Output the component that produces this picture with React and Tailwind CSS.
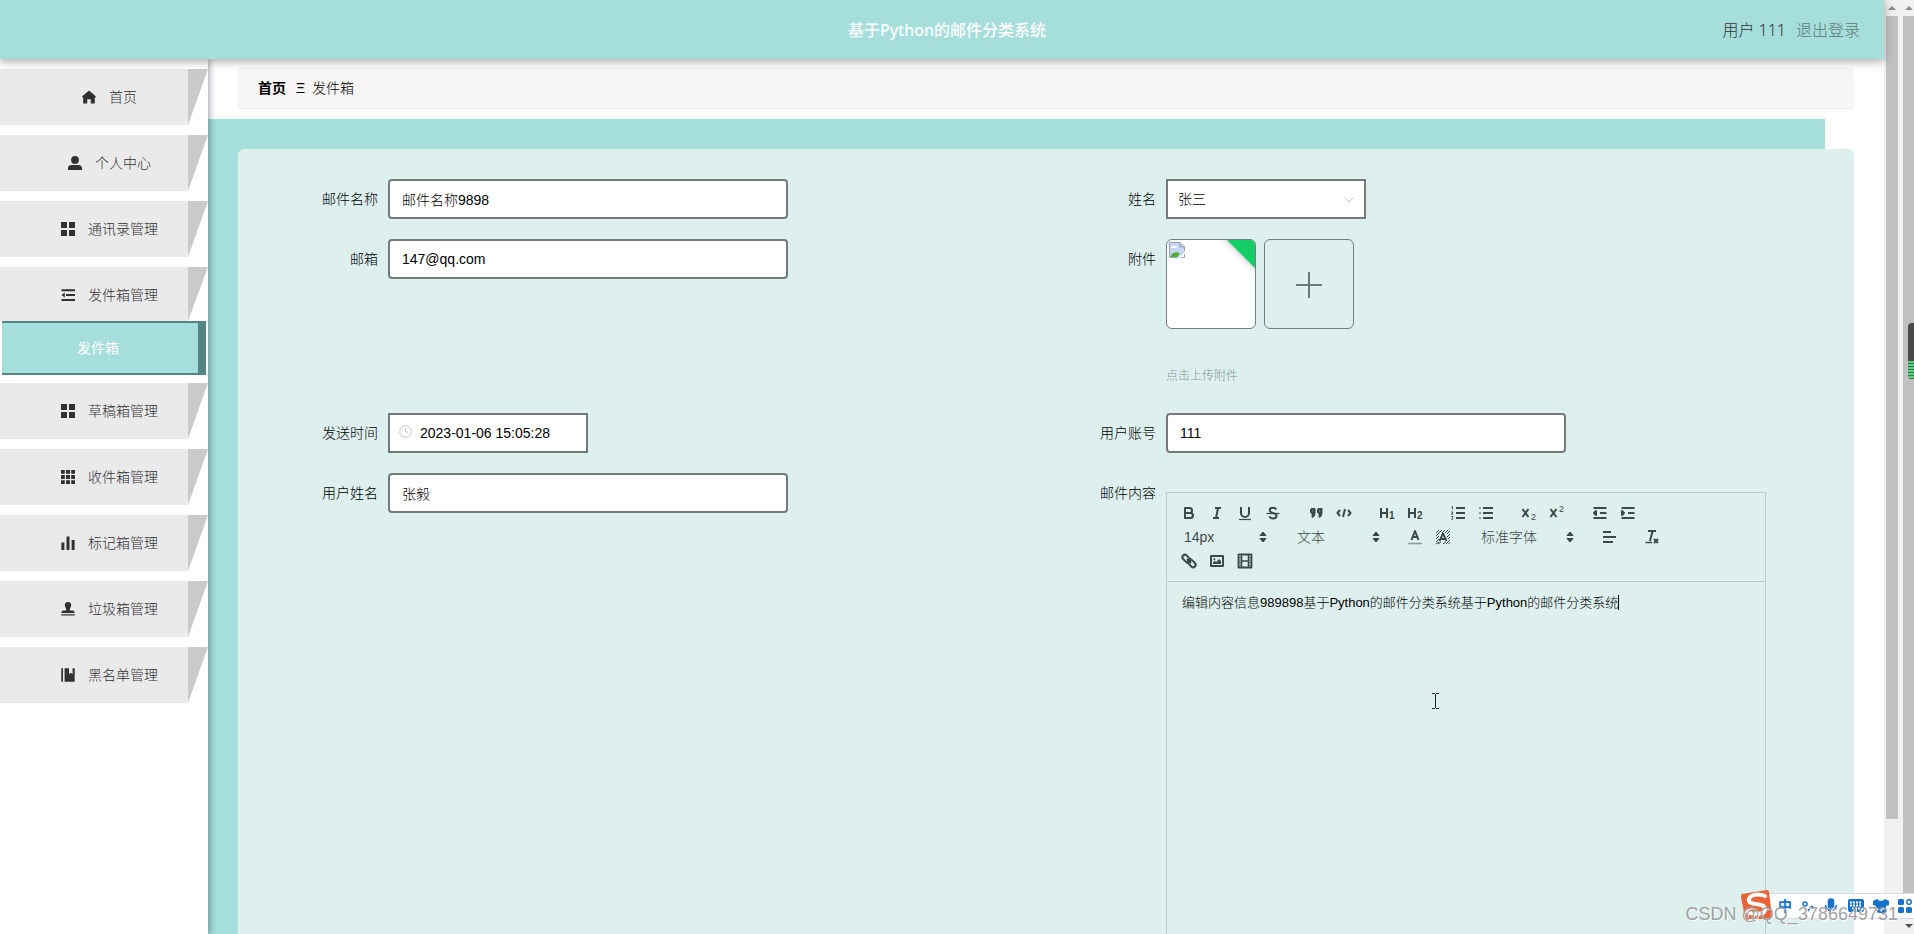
import { useState } from 'react';

const menuItems = [
  { label: '首页', icon: 'home' },
  { label: '个人中心', icon: 'user' },
  { label: '通讯录管理', icon: 'menu' },
  { label: '发件箱管理', icon: 'fold', children: ['发件箱'] },
  { label: '草稿箱管理', icon: 'menu' },
  { label: '收件箱管理', icon: 'grid' },
  { label: '标记箱管理', icon: 'data' },
  { label: '垃圾箱管理', icon: 'stamp' },
  { label: '黑名单管理', icon: 'book' },
];

const menuIcons = {
  home: <path d="M7 0.5 L0.3 6.2 V7.5 H1.2 V13.5 H5.2 V9.2 H8.8 V13.5 H12.8 V7.5 H13.7 V6.2 Z" />,
  user: (
    <>
      <circle cx="7" cy="3.9" r="3.9" />
      <path d="M0 14 V12.5 A3.5 3.5 0 0 1 3.5 9 H10.5 A3.5 3.5 0 0 1 14 12.5 V14 Z" />
    </>
  ),
  menu: <path d="M0 0H6V6H0Z M8 0H14V6H8Z M0 8H6V14H0Z M8 8H14V14H8Z" />,
  fold: <path d="M0.5 1.2H14V3.2H0.5Z M5 6H14V8H5Z M0.5 11H14V13H0.5Z M0.5 7 L3.8 4.5 V9.5Z" />,
  grid: (
    <path d="M0 0H3.8V3.8H0Z M5 0H9V3.8H5Z M10.2 0H14V3.8H10.2Z M0 5H3.8V9H0Z M5 5H9V9H5Z M10.2 5H14V9H10.2Z M0 10.2H3.8V14H0Z M5 10.2H9V14H5Z M10.2 10.2H14V14H10.2Z" />
  ),
  data: <path d="M0.4 6.5H3.4V14H0.4Z M5.5 0.4H8.5V14H5.5Z M10.6 4H13.6V14H10.6Z" />,
  stamp: (
    <path d="M7 0 A3.2 3.2 0 0 1 10.2 3.2 C10.2 5 8.8 5.8 8.8 7.5 V8.6 H11.5 A2 2 0 0 1 13.5 11 H0.5 A2 2 0 0 1 2.5 8.6 H5.2 V7.5 C5.2 5.8 3.8 5 3.8 3.2 A3.2 3.2 0 0 1 7 0Z M0.3 12.2H13.7V13.6H0.3Z" />
  ),
  book: <path d="M0.3 0.2H2V13.8H0.3Z M3.6 0.2H8V6.3L9.8 4.8L11.6 6.3V0.2H13.7V13.8H3.6Z" />,
};

function MenuIcon({ name }) {
  return (
    <svg className="w-3.5 h-3.5 shrink-0" viewBox="0 0 14 14" fill="currentColor">
      {menuIcons[name]}
    </svg>
  );
}

const toolbarIcons = {
  bold: (
    <>
      <path d="M5 4H9.5A2.5 2.5 0 0 1 9.5 9H5Z" />
      <path d="M5 9H10.5A2.5 2.5 0 0 1 10.5 14H5Z" />
    </>
  ),
  italic: <path d="M7 4H13M5 14H11M8 14L10 4" />,
  underline: (
    <>
      <path d="M5 3V9A4 4 0 0 0 13 9V3" />
      <path d="M3 15.5H15" strokeWidth="1.2" />
    </>
  ),
  strike: (
    <>
      <path d="M12.3 5.6C11.6 4 10.4 3.7 9 3.7C7.2 3.7 5.7 4.6 5.7 6.3C5.7 8 7.2 8.5 9 9C11.2 9.6 12.5 10.2 12.5 11.8C12.5 13.4 11 14.4 9 14.4C7.2 14.4 5.9 13.8 5.3 12.3" />
      <path d="M2.5 9.5H15.5" strokeWidth="1.2" />
    </>
  ),
  quote: (
    <path
      d="M4 5H7.5V8.5C7.5 11 6.5 12.5 4.8 13M4 5V8.3H7M11 5H14.5V8.5C14.5 11 13.5 12.5 11.8 13M11 5V8.3H14"
      fill="currentColor"
    />
  ),
  code: <path d="M5 6L2.5 9L5 12M13 6L15.5 9L13 12M10 5L8 13" />,
  h1: (
    <>
      <path d="M3 4V14M9 4V14M3 9H9" />
      <text x="11" y="15" fontSize="10" fontWeight="700" fill="currentColor" stroke="none">1</text>
    </>
  ),
  h2: (
    <>
      <path d="M3 4V14M9 4V14M3 9H9" />
      <text x="11" y="15" fontSize="10" fontWeight="700" fill="currentColor" stroke="none">2</text>
    </>
  ),
  ordered: (
    <>
      <path d="M7 4H16M7 9H16M7 14H16" />
      <path d="M2.5 3L3.5 2.5V5.5M2.3 8H4L2.5 10.3H4.2M2.3 12.6H4L3.2 13.8L4 14.4L3.3 15.5H2.2" strokeWidth="0.9" />
    </>
  ),
  bullet: <path d="M6 4H16M6 9H16M6 14H16M2.5 4H3.5M2.5 9H3.5M2.5 14H3.5" />,
  sub: (
    <>
      <path d="M2.5 5L8.5 13M8.5 5L2.5 13" />
      <text x="11" y="16" fontSize="9" fill="currentColor" stroke="none">2</text>
    </>
  ),
  sup: (
    <>
      <path d="M2.5 5L8.5 13M8.5 5L2.5 13" />
      <text x="11" y="8" fontSize="9" fill="currentColor" stroke="none">2</text>
    </>
  ),
  outdent: (
    <>
      <path d="M2.5 4H15.5M2.5 14H15.5M9 9H15.5" />
      <path d="M5 7V11L3 9Z" fill="currentColor" />
    </>
  ),
  indent: (
    <>
      <path d="M2.5 4H15.5M2.5 14H15.5M9 9H15.5" />
      <path d="M3 7V11L5 9Z" fill="currentColor" />
    </>
  ),
  color: (
    <>
      <path d="M2 15.5H16" strokeWidth="1.6" opacity="0.5" />
      <path d="M5.5 12L9 3L12.5 12M6.5 9H11.5" />
    </>
  ),
  background: (
    <>
      <path
        d="M2 5L5 2M2 8L8 2M2 11L5 8M8 5L11 2M2 14L5 11M11 5L14 2M2 16L5 14M13 6L16 3M4 16L7 14M13 9L16 6M9 16L12 14M14 11L16 9M12 16L16 12M14.5 16L16 14.5"
        strokeWidth="1"
      />
      <path d="M5.5 13L9 5.5L12.5 13M6.5 11H11.5" strokeWidth="1.8" />
    </>
  ),
  align: <path d="M3 4H11M3 9H16M3 14H13" />,
  clean: (
    <>
      <path d="M5 3H13M9.6 3L7 13" />
      <path d="M2.5 14.5H9" strokeWidth="1.4" />
      <path d="M11 11L15 15M15 11L11 15" />
    </>
  ),
  link: (
    <>
      <path d="M7 7L11 11" />
      <rect x="1.8" y="4.2" width="9" height="5" rx="2.5" transform="rotate(45 6.3 6.7)" />
      <rect x="7.2" y="8.8" width="9" height="5" rx="2.5" transform="rotate(45 11.7 11.3)" />
    </>
  ),
  image: (
    <>
      <rect x="3" y="4" width="12" height="10" />
      <circle cx="6.3" cy="7.2" r="1" fill="currentColor" stroke="none" />
      <path d="M5 12V10.5L7 9L8.5 10L11 7L13 9V12Z" fill="currentColor" stroke="none" />
    </>
  ),
  video: (
    <>
      <rect x="2.5" y="2.5" width="13" height="13" strokeWidth="1.8" />
      <path d="M5.5 3V15M12.5 3V15M5.5 9H12.5" strokeWidth="1.6" />
      <path d="M3 5.5H5M3 8H5M3 10.5H5M3 13H5M13 5.5H15M13 8H15M13 10.5H15M13 13H15" strokeWidth="0.9" />
    </>
  ),
};

function ToolButton({ name }) {
  return (
    <button type="button" aria-label={name} className="w-7 h-6 flex items-center justify-center">
      <svg
        className="w-[18px] h-[18px] overflow-visible"
        viewBox="0 0 18 18"
        fill="none"
        stroke="currentColor"
        strokeWidth="2"
        strokeLinejoin="round"
      >
        {toolbarIcons[name]}
      </svg>
    </button>
  );
}

function ToolGroup({ names }) {
  return (
    <div className="flex mr-[15px]">
      {names.map((name) => (
        <ToolButton key={name} name={name} />
      ))}
    </div>
  );
}

function Picker({ label, value, wide }) {
  return (
    <div className={`relative mr-[15px] h-6 ${wide ? 'w-[108px]' : 'w-[98px]'}`}>
      <select aria-label={label} className="w-full h-6 pl-[9px] appearance-none bg-transparent text-sm leading-6 outline-none">
        <option>{value}</option>
      </select>
      <svg className="absolute right-px top-[3px] w-[18px] h-[18px] pointer-events-none" viewBox="0 0 18 18" fill="currentColor">
        <path d="M6 7.5L9 4L12 7.5Z M6 10.5L9 14L12 10.5Z" stroke="currentColor" strokeLinejoin="round" />
      </svg>
    </div>
  );
}

function Field({ id, label, children }) {
  return (
    <div className="flex items-start">
      <label htmlFor={id} className="w-[120px] shrink-0 pr-2.5 text-right text-sm leading-10">
        {label}
      </label>
      {children}
    </div>
  );
}

function TextInput({ id, defaultValue }) {
  return (
    <input
      id={id}
      type="text"
      defaultValue={defaultValue}
      className="w-[400px] h-10 px-3 border-2 border-[#737b7b] rounded bg-white text-sm outline-none"
    />
  );
}

function Upload() {
  return (
    <div>
      <div className="flex gap-2">
        <div className="relative w-[90px] h-[90px] overflow-hidden rounded-md border border-[#6f8080] bg-white p-0.5">
          <svg className="w-4 h-4" viewBox="0 0 16 16">
            <path d="M0.5 0.5H11L15.5 5V10L10 15.5H0.5Z" fill="#c6d6f6" />
            <path d="M2 5.5A2 2 0 0 1 5 4A2 2 0 0 1 8 6H2Z" fill="#fff" />
            <path d="M1 15.5C3 10 7 9 11 11.5L8 15.5Z" fill="#55a83c" />
            <path d="M0.5 15.5V0.5H11L15.5 5V9M11 0.5V5H15.5M0.5 15.5H8M12 15.5H15.5V12" fill="none" stroke="#9a9fa6" />
          </svg>
          <svg className="absolute top-0 right-0 w-10 h-10" viewBox="0 0 40 40">
            <path d="M4 0L40 36V0Z" fill="#000" opacity="0.03" />
            <path d="M8 0L40 32V0Z" fill="#000" opacity="0.04" />
            <path d="M10 0L40 30V0Z" fill="#000" opacity="0.05" />
            <path d="M12 0L40 28V0Z" fill="#13ce66" />
          </svg>
        </div>
        <button
          type="button"
          id="attachment"
          aria-label="附件"
          className="w-[90px] h-[90px] rounded-md border border-[#6f8080] flex items-center justify-center text-[#6b7878]"
        >
          <svg className="w-7 h-7" viewBox="0 0 28 28" fill="none" stroke="currentColor" strokeWidth="2">
            <path d="M1 15H27M14 2V28" />
          </svg>
        </button>
      </div>
      <div className="mt-[37px] pb-[7px] text-xs leading-5 text-[#84969b]">点击上传附件</div>
    </div>
  );
}

function Editor() {
  return (
    <div className="mt-[19px] w-[600px] border border-[#b9cccb]">
      <div className="flex flex-wrap p-2 border-b border-[#b9cccb] text-[#3d4848]">
        <ToolGroup names={['bold', 'italic', 'underline', 'strike']} />
        <ToolGroup names={['quote', 'code']} />
        <ToolGroup names={['h1', 'h2']} />
        <ToolGroup names={['ordered', 'bullet']} />
        <ToolGroup names={['sub', 'sup']} />
        <ToolGroup names={['outdent', 'indent']} />
        <Picker label="字号" value="14px" />
        <Picker label="标题" value="文本" />
        <ToolGroup names={['color', 'background']} />
        <Picker label="字体" value="标准字体" wide />
        <ToolGroup names={['align']} />
        <ToolGroup names={['clean']} />
        <ToolGroup names={['link', 'image', 'video']} />
      </div>
      <div
        id="content"
        role="textbox"
        aria-multiline="true"
        aria-label="邮件内容"
        contentEditable
        suppressContentEditableWarning
        className="min-h-[500px] px-[15px] py-3 text-[13px] leading-[18px] outline-none"
      >
        <span className="border-r border-black">编辑内容信息989898基于Python的邮件分类系统基于Python的邮件分类系统</span>
      </div>
    </div>
  );
}

function Sidebar() {
  const [active, setActive] = useState('发件箱');

  return (
    <nav className="relative z-10 w-[208px] shrink-0 bg-white pt-2.5 shadow-[2px_0_6px_rgba(0,21,41,0.35)]">
      {menuItems.map((item) => (
        <div key={item.label}>
          <a
            href="#"
            className={`flex text-sm text-[#303133] ${item.children ? 'h-[54px]' : 'h-14 mb-2.5'}`}
          >
            <span
              className={`flex-1 pl-[31px] flex items-center justify-center gap-[13px] bg-[#eaeaea] ${item.children ? 'pt-0.5' : ''}`}
            >
              <MenuIcon name={item.icon} />
              {item.label}
            </span>
            <span className="w-5 bg-[#cbcaca] [clip-path:polygon(0_0,100%_0,0_100%)]" />
          </a>
          {item.children?.map((child) => (
            <button
              key={child}
              type="button"
              onClick={() => setActive(child)}
              className={`block w-[204px] h-[54px] ml-0.5 mb-2 pr-1 text-sm ${
                active === child
                  ? 'border-y-2 border-r-8 border-[#558583] bg-[#a5dedb] font-normal text-white'
                  : 'text-[#303133]'
              }`}
            >
              {child}
            </button>
          ))}
        </div>
      ))}
    </nav>
  );
}

function Scrollbars() {
  return (
    <div className="flex shrink-0 bg-[#f1f1f1]" aria-hidden="true">
      <div className="w-4 px-0.5 flex flex-col">
        <svg className="h-4 w-3" viewBox="0 0 12 16" fill="#8b8b8b">
          <path d="M6 6L10 10H2Z" />
        </svg>
        <div className="h-[86%] bg-[#c1c1c1]" />
      </div>
      <div className="w-3.5 pl-[3px] flex flex-col">
        <svg className="h-4 w-3 shrink-0" viewBox="0 0 12 16" fill="#8b8b8b">
          <path d="M6 6L10 10H2Z" />
        </svg>
        <div className="flex-1 bg-[#c1c1c1]" />
        <svg className="h-[41px] w-3 shrink-0" viewBox="0 0 12 41" fill="#505050">
          <path d="M6 35L10 31H2Z" />
        </svg>
      </div>
    </div>
  );
}

function InputMethodBar() {
  return (
    <div className="absolute right-0 bottom-[15px] w-[154px] h-[26px] border-y border-l border-[#dcd8ee] bg-white/95 flex items-center text-[#1672cf]">
      <svg className="absolute -left-5 -top-[5px] w-8 h-8" viewBox="0 0 32 32">
        <path d="M1 5L26 1Q28 1 28 3L31 27Q31 29 29 29L7 31Q5 31 4 29L0 8Q0 5 1 5Z" fill="#ea6337" />
        <path
          d="M24 7C16 4 7 6 8 12C9 17 24 13 24 20C24 26 13 26 7 23"
          fill="none"
          stroke="#fff"
          strokeWidth="4"
          strokeLinecap="round"
        />
      </svg>
      <div className="flex w-full items-center justify-between pl-[17px] pr-0.5">
        <span className="w-3.5 text-sm leading-6 font-bold">中</span>
        <svg className="w-3.5 h-3.5" viewBox="0 0 14 14" fill="currentColor">
          <circle cx="4" cy="5" r="2" fill="none" stroke="currentColor" strokeWidth="1.5" />
          <circle cx="11" cy="8" r="1.5" />
          <path d="M6.5 10H9.5L7 13Z" />
        </svg>
        <svg className="w-3.5 h-4" viewBox="0 0 14 16" fill="none" stroke="currentColor" strokeWidth="1.6">
          <rect x="4.5" y="1" width="5" height="9" rx="2.5" fill="currentColor" />
          <path d="M1.5 7A5.5 5.5 0 0 0 12.5 7M7 12V15" />
        </svg>
        <svg className="w-4 h-3.5" viewBox="0 0 16 14">
          <rect width="16" height="13" rx="2" fill="currentColor" />
          <path d="M2 3.5H14M2 6.5H14M4 9.5H12" stroke="#fff" strokeWidth="1.8" strokeDasharray="2 1" />
        </svg>
        <svg className="w-4 h-3.5" viewBox="0 0 16 14" fill="currentColor">
          <path d="M4 0Q8 4 12 0L16 2V6L13 7V13Q8 15 3 13V7L0 6V2Z" />
        </svg>
        <svg className="w-3.5 h-3.5" viewBox="0 0 14 14" fill="currentColor">
          <rect width="6" height="6" rx="1.5" />
          <circle cx="11" cy="3" r="2.3" fill="none" stroke="currentColor" strokeWidth="1.4" />
          <rect y="8" width="6" height="6" rx="1.5" />
          <rect x="8" y="8" width="6" height="6" rx="1.5" />
        </svg>
      </div>
    </div>
  );
}

export default function App() {
  return (
    <div className="relative flex h-screen overflow-hidden bg-white text-black font-light font-['Liberation_Sans','Noto_Sans_CJK_SC',sans-serif]">
      <div className="flex-1 min-w-0 flex flex-col">
        <header className="relative z-20 shrink-0 h-[59px] px-6 flex items-center bg-[#a5dedb] font-['Noto_Sans','Noto_Sans_CJK_SC',sans-serif] shadow-[0_2px_8px_1px_rgba(110,95,95,0.5)]">
          <h1 className="absolute inset-x-0 pl-2.5 text-center text-base font-medium text-white">基于Python的邮件分类系统</h1>
          <div className="relative ml-auto flex gap-2.5 text-base">
            <span className="text-[#333]">用户 111</span>
            <a href="#" className="text-[#5f7775]">退出登录</a>
          </div>
        </header>

        <div className="flex-1 min-h-0 flex">
          <Sidebar />

          <main className="flex-1 min-w-0 flex flex-col">
            <div className="mt-2 mx-[30px] h-[42px] shrink-0 px-5 flex items-center gap-2.5 rounded border-b border-[#eceaea] bg-[#f7f5f5] text-sm">
              <a href="#" className="font-bold">首页</a>
              <span className="w-1.5">Ξ</span>
              <span>发件箱</span>
            </div>

            <div className="mt-2.5 mr-[59px] flex-1 min-h-0 pt-[30px] pl-[30px] bg-[#a5dedb]">
              <form className="-mr-[29px] p-[30px] grid grid-cols-2 gap-y-5 items-start rounded-t-md bg-[#ddf0ee]">
                <Field id="subject" label="邮件名称">
                  <TextInput id="subject" defaultValue="邮件名称9898" />
                </Field>
                <Field id="name" label="姓名">
                  <div className="relative w-[200px]">
                    <select id="name" className="w-full h-10 px-2.5 border-2 border-[#737b7b] appearance-none bg-white text-sm outline-none">
                      <option>张三</option>
                    </select>
                    <svg className="absolute right-3 top-4 w-2.5 h-2.5 pointer-events-none" viewBox="0 0 10 10" fill="none" stroke="#c0c4cc">
                      <path d="M0.5 2.5L5 7L9.5 2.5" />
                    </svg>
                  </div>
                </Field>
                <Field id="email" label="邮箱">
                  <TextInput id="email" defaultValue="147@qq.com" />
                </Field>
                <Field id="attachment" label="附件">
                  <Upload />
                </Field>
                <Field id="sendTime" label="发送时间">
                  <div className="relative w-[200px]">
                    <input
                      id="sendTime"
                      type="text"
                      defaultValue="2023-01-06 15:05:28"
                      className="w-full h-10 pl-[30px] border-2 border-[#737b7b] bg-white text-sm outline-none"
                    />
                    <svg className="absolute left-[11px] top-3 w-[13px] h-[13px]" viewBox="0 0 13 13" fill="none" stroke="#c0c4cc">
                      <circle cx="6.5" cy="6.5" r="5.8" />
                      <path d="M6.5 3V7H9.5" />
                    </svg>
                  </div>
                </Field>
                <Field id="account" label="用户账号">
                  <TextInput id="account" defaultValue="111" />
                </Field>
                <Field id="realName" label="用户姓名">
                  <TextInput id="realName" defaultValue="张毅" />
                </Field>
                <Field id="content" label="邮件内容">
                  <Editor />
                </Field>
              </form>
            </div>
          </main>
        </div>
      </div>

      <Scrollbars />

      {/* floating desktop widgets */}
      <div className="absolute right-0 top-[323px] w-1.5 h-14 rounded-l bg-[#4a4a4a] overflow-hidden flex flex-col justify-end">
        <div className="h-[18px] bg-[repeating-linear-gradient(#5fce80_0_2px,#2f7a48_2px_3px)]" />
      </div>
      <svg className="absolute left-3/4 top-3/4 -mt-2 -ml-1 w-[7px] h-4" viewBox="0 0 7 16" fill="none" stroke="#222">
        <path d="M0 0.5H3M4 0.5H7M3.5 1V15M0 15.5H3M4 15.5H7" />
      </svg>
      <InputMethodBar />
      <div className="absolute right-4 bottom-2 text-lg leading-6 text-[#9a9a9a] [text-shadow:1px_1px_0_#fff] opacity-90">
        CSDN @QQ_3786649731
      </div>
    </div>
  );
}
